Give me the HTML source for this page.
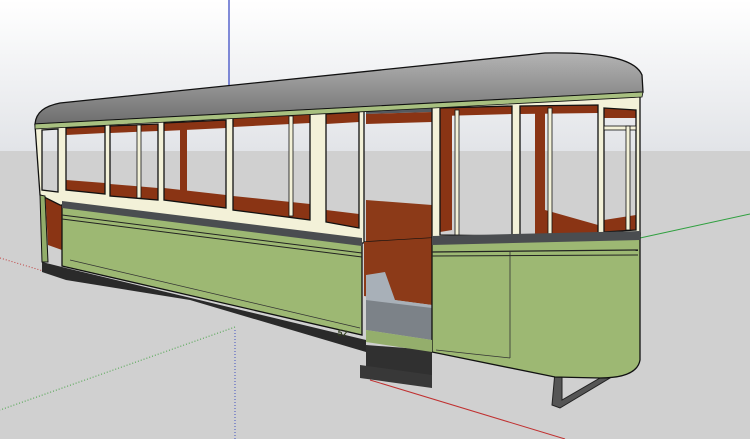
<!DOCTYPE html>
<html><head><style>
html,body{margin:0;padding:0;width:750px;height:439px;overflow:hidden;background:#fff}
svg{display:block}
</style></head><body>
<svg width="750" height="439" viewBox="0 0 750 439" xmlns="http://www.w3.org/2000/svg">
<defs>
<linearGradient id="sky" x1="0" y1="0" x2="0" y2="1"><stop offset="0" stop-color="#ffffff"/><stop offset="1" stop-color="#e2e4e8"/></linearGradient>
<linearGradient id="roof" x1="0" y1="0" x2="0" y2="1"><stop offset="0" stop-color="#b4b4b4"/><stop offset="1" stop-color="#6e6e6e"/></linearGradient>
</defs>
<rect width="750" height="151" fill="url(#sky)"/>
<rect y="151" width="750" height="288" fill="#d0d0d0"/>
<line x1="229" y1="0" x2="229" y2="85" stroke="#3040c0" stroke-width="1.2"/>
<line x1="0" y1="258" x2="60" y2="276" stroke="#c04040" stroke-width="1" stroke-dasharray="1,2"/>
<line x1="370" y1="380" x2="565" y2="439" stroke="#c03030" stroke-width="1"/>
<line x1="640" y1="238" x2="750" y2="214" stroke="#30a040" stroke-width="1"/>
<line x1="235" y1="327" x2="0" y2="410" stroke="#40a040" stroke-width="1" stroke-dasharray="1,2"/>
<line x1="235" y1="330" x2="235" y2="439" stroke="#4050c0" stroke-width="1" stroke-dasharray="1,2"/>
<polygon points="42,262 66,268 366,340 366,352 190,300 66,280 42,272" fill="#2a2a2a"/>
<polygon points="366,345 432,350 432,385 366,372" fill="#303030"/>
<polygon points="360,365 432,375 432,388 360,378" fill="#383838"/>
<polygon points="555,372 562,372 562,400 600,378 610,378 560,408 552,405" fill="#555" stroke="#222" stroke-width="1"/>
<polygon points="45,190 62,195 62,250 48,245" fill="#8a3414"/>
<polygon points="366,200 432,205 432,300 366,290" fill="#8c3a18"/>
<polygon points="366,103 432,101 432,112 366,114" fill="#555a60"/>
<polygon points="366,114 432,112 432,122 366,124" fill="#8a3414"/>
<g fill="#8a3414">
<polygon points="66,128 105,126 105,133 66,135"/>
<polygon points="110,126 158,124 158,131 110,133"/>
<polygon points="164,123 226,120 226,128 164,131"/>
<polygon points="233,118 310,114 310,123 233,127"/>
<polygon points="326,114 359,112 359,122 326,124"/>
<polygon points="66,180 105,183 105,194 66,190"/>
<polygon points="110,184 158,188 158,200 110,196"/>
<polygon points="164,188 226,195 226,208 164,200"/>
<polygon points="233,196 310,204 310,220 233,210"/>
<polygon points="326,210 359,214 359,228 326,222"/>
<polygon points="180,128 187,128 187,195 180,193"/>
<polygon points="440,108 512,106 512,114 440,116"/>
<polygon points="520,106 598,105 598,113 520,114"/>
<polygon points="440,108 452,108 452,230 440,232"/>
<polygon points="535,106 545,106 545,236 535,236"/>
<polygon points="545,210 598,225 598,236 545,236"/>
<polygon points="604,108 636,110 636,118 604,118"/>
<polygon points="604,220 636,215 636,230 604,232"/>
</g>
<path fill-rule="evenodd" fill="#f3f1d8" stroke="#111" stroke-width="1.3" d="
M35,125 L640,96 L640,235 L432,238 L362,243 L60,205 L40,195 Z
M42,130 L58,129 L58,192 L42,190 Z
M66,128 L105,126 L105,194 L66,190 Z
M110,126 L158,124 L158,200 L110,196 Z
M164,123 L226,120 L226,208 L164,200 Z
M233,118 L310,114 L310,220 L233,210 Z
M326,114 L359,112 L359,228 L326,222 Z
M364,103 L432,101 L432,238 L364,242 Z
M440,108 L512,106 L512,236 L440,235 Z
M520,106 L598,105 L598,236 L520,236 Z
M604,108 L636,110 L636,230 L604,232 Z"/>
<!-- door lower interior -->
<polygon points="364,242 432,238 432,305 364,296" fill="#8c3a18"/>
<polygon points="366,275 385,272 395,300 432,305 432,340 366,330" fill="#a8b0b8"/>
<polygon points="366,300 432,308 432,340 366,330" fill="#7c8288"/>
<g fill="#f3f1d8" stroke="#111" stroke-width="0.8">
<rect x="137" y="125" width="4" height="73"/>
<rect x="289" y="116" width="4" height="100"/>
<rect x="455" y="110" width="4" height="125"/>
<rect x="548" y="108" width="4" height="128"/>
<rect x="604" y="126" width="32" height="4"/>
<rect x="626" y="126" width="4" height="104"/>
</g>
<path d="M35,124 C36,112 45,106 60,103 L545,53 C600,52 635,58 642,75 L643,92 Z" fill="url(#roof)" stroke="#111" stroke-width="1.3"/>
<path d="M35,124 L643,92 L642,97 L35,129 Z" fill="#a8c080" stroke="#111" stroke-width="0.8"/>
<polygon points="62,205 362,244 362,335 62,266" fill="#9db873" stroke="#111" stroke-width="1.3"/>
<polygon points="40,195 45,196 48,262 42,262" fill="#92ad6a" stroke="#111" stroke-width="1"/>
<path d="M432,238 L640,233 L640,360 C638,372 625,378 600,378 L555,377 L432,352 Z" fill="#9db873" stroke="#111" stroke-width="1.3"/>
<polygon points="366,330 432,340 432,352 366,342" fill="#94ae6c"/>
<polygon points="62,201 362,238 362,246 62,208" fill="#4a4d50"/>
<path d="M432,236 L640,231 L640,240 L432,245 Z" fill="#4a4d50"/>
<line x1="62" y1="215" x2="362" y2="253" stroke="#222" stroke-width="1"/>
<line x1="62" y1="219" x2="362" y2="257" stroke="#222" stroke-width="1"/>
<line x1="432" y1="252" x2="638" y2="250" stroke="#222" stroke-width="1.3"/>
<line x1="432" y1="256" x2="638" y2="255" stroke="#222" stroke-width="1"/>
<line x1="70" y1="260" x2="360" y2="328" stroke="#333" stroke-width="0.8"/>
<line x1="510" y1="252" x2="510" y2="358" stroke="#333" stroke-width="0.8"/>
<line x1="436" y1="350" x2="510" y2="358" stroke="#333" stroke-width="0.8"/>
<text x="337" y="335" font-family="Liberation Sans, sans-serif" font-size="9" font-weight="bold" fill="#334020" transform="rotate(12 337 335)">57</text>
</svg>
</body></html>
